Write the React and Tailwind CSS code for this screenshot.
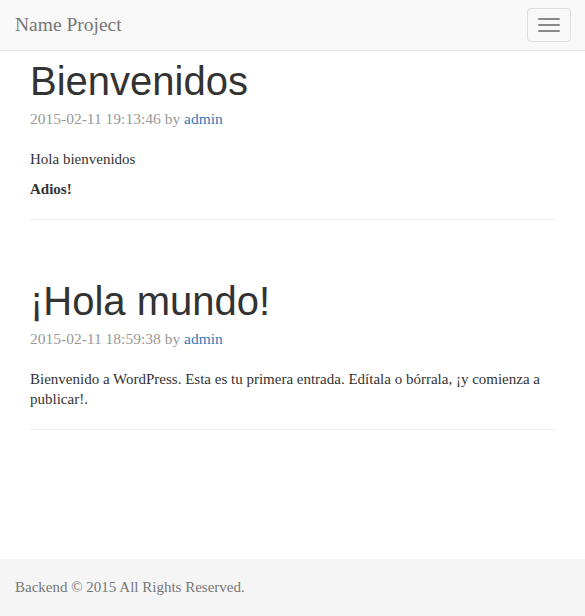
import React from 'react';

const serif = "font-['Liberation_Serif','Times_New_Roman',serif]";
const sans = "font-['Liberation_Sans',Arial,sans-serif]";

const posts = [
  {
    title: 'Bienvenidos',
    date: '2015-02-11 19:13:46',
    author: 'admin',
    body: [
      { text: 'Hola bienvenidos' },
      { text: 'Adios!', bold: true },
    ],
  },
  {
    title: '¡Hola mundo!',
    date: '2015-02-11 18:59:38',
    author: 'admin',
    body: [
      {
        text: 'Bienvenido a WordPress. Esta es tu primera entrada. Edítala o bórrala, ¡y comienza a publicar!.',
      },
    ],
  },
];

const Post = ({ post, first }) => (
  <article className={first ? 'pt-[8px]' : 'pt-[59px]'}>
    <h1 className={`${sans} text-[40px] leading-[44px] text-[#333]`}>{post.title}</h1>
    <div className="mt-[6px] text-[15.5px] leading-[20px] text-[#999]">
      {post.date} by{' '}
      <a href="#" className="text-[#337ab7]">
        {post.author}
      </a>
    </div>
    <div className="mt-[20px] space-y-[10px] text-[15px] leading-[20px] text-[#333]">
      {post.body.map((p, i) => (
        <p key={i} className={p.bold ? 'font-bold' : ''}>
          {p.text}
        </p>
      ))}
    </div>
    <hr className="mt-[20px] border-0 border-t border-[#eee]" />
  </article>
);

export default function App() {
  return (
    <div className={`${serif} flex min-h-[616px] flex-col bg-white`}>
      {/* Navbar */}
      <nav className="flex h-[51px] items-center justify-between border-b border-[#e7e7e7] bg-[#f8f8f8] pl-[15px] pr-[14px]">
        <span className="text-[19.5px] text-[#777]">Name Project</span>
        <button className="flex h-[34px] w-[44px] flex-col items-center justify-center gap-[4px] rounded-[4px] border border-[#ddd]">
          <span className="h-[2px] w-[22px] rounded-[1px] bg-[#888]" />
          <span className="h-[2px] w-[22px] rounded-[1px] bg-[#888]" />
          <span className="h-[2px] w-[22px] rounded-[1px] bg-[#888]" />
        </button>
      </nav>

      {/* Posts */}
      <main className="flex-1 px-[30px]">
        {posts.map((post, i) => (
          <Post key={i} post={post} first={i === 0} />
        ))}
      </main>

      {/* Footer */}
      <footer className="flex h-[57px] items-center bg-[#f5f5f5] px-[15px] text-[15px] text-[#777]">
        Backend © 2015 All Rights Reserved.
      </footer>
    </div>
  );
}
